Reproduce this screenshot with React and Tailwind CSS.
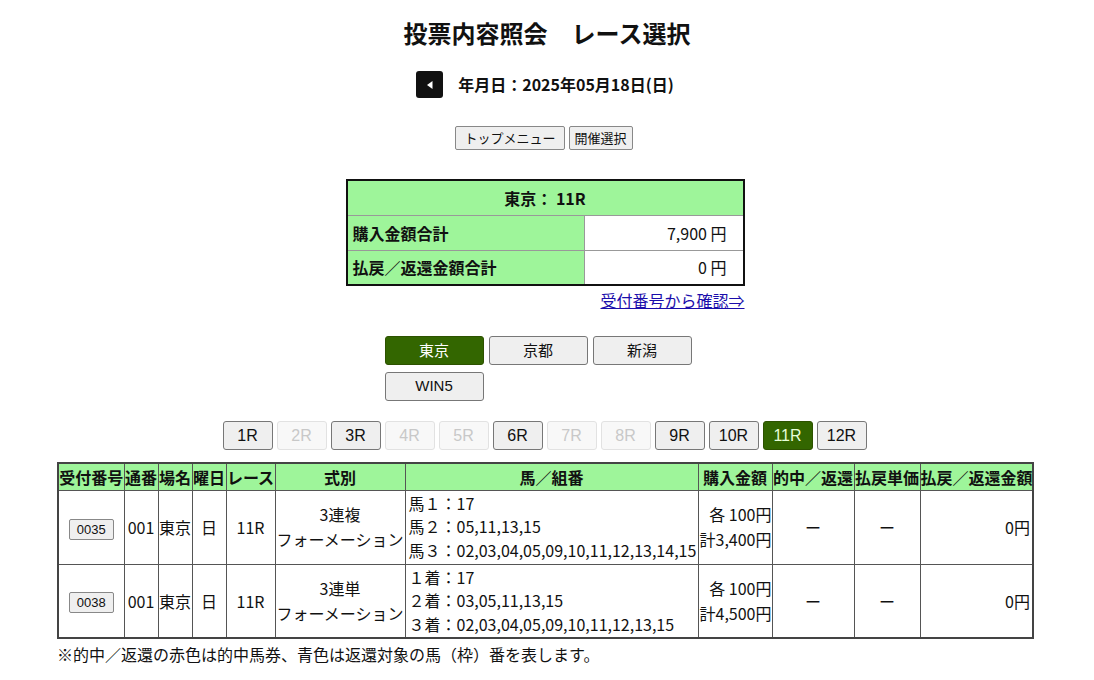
import React from "react";

const races = [
  { r: "1R", on: true },
  { r: "2R", on: false },
  { r: "3R", on: true },
  { r: "4R", on: false },
  { r: "5R", on: false },
  { r: "6R", on: true },
  { r: "7R", on: false },
  { r: "8R", on: false },
  { r: "9R", on: true },
  { r: "10R", on: true },
  { r: "11R", on: true, active: true },
  { r: "12R", on: true },
];

const bets = [
  {
    no: "0035",
    type: "3連複",
    lines: ["馬１：17", "馬２：05,11,13,15", "馬３：02,03,04,05,09,10,11,12,13,14,15"],
    total: "計3,400円",
  },
  {
    no: "0038",
    type: "3連単",
    lines: ["１着：17", "２着：03,05,11,13,15", "３着：02,03,04,05,09,10,11,12,13,15"],
    total: "計4,500円",
  },
];

const heads = [
  ["受付番号", "w-[66px]"],
  ["通番", "w-[34px]"],
  ["場名", "w-[34px]"],
  ["曜日", "w-[34px]"],
  ["レース", "w-[49px]"],
  ["式別", "w-[130px]"],
  ["馬／組番", "w-[293px]"],
  ["購入金額", "w-[74px]"],
  ["的中／返還", "w-[82px]"],
  ["払戻単価", "w-[66px]"],
  ["払戻／返還金額", "w-[113px]"],
];

const font = { fontFamily: '"Noto Sans CJK JP", "Noto Sans", sans-serif' };

export default function App() {
  return (
    <div className="w-[1094px] min-h-[680px] bg-white text-[#111]" style={font}>
      <h1 className="pt-[15px] text-center text-[24px] font-bold leading-[36px]">
        投票内容照会　レース選択
      </h1>

      <div className="mt-[20px] flex items-center justify-center gap-[15px] pr-[4px]">
        <button className="flex h-[27px] w-[27px] items-center justify-center rounded-[3px] bg-[#111]">
          <svg width="10" height="10" viewBox="0 0 10 10">
            <polygon points="7.5,1 7.5,9 2,5" fill="#fff" />
          </svg>
        </button>
        <span className="text-[16px] font-bold leading-[27px]">年月日：2025年05月18日(日)</span>
      </div>

      <div className="mt-[28px] flex justify-center gap-[4px] pr-[6px]">
        <button className="h-[24px] rounded-[2px] border border-[#888] bg-[#efefef] px-[8px] text-[13px] leading-[20px]">
          トップメニュー
        </button>
        <button className="h-[24px] rounded-[2px] border border-[#888] bg-[#efefef] px-[5px] text-[13px] leading-[20px]">
          開催選択
        </button>
      </div>

      <div className="mx-auto mt-[29px] w-[399px] -translate-x-[2px]">
        <table className="w-full border-collapse border-2 border-[#111] text-[16px]">
          <tbody>
            <tr className="h-[35px] bg-[#9ef59a]">
              <td colSpan={2} className="border border-[#999] text-center font-bold">
                東京： 11R
              </td>
            </tr>
            <tr className="h-[35px]">
              <td className="w-[238px] border border-[#999] bg-[#9ef59a] px-[5px] font-bold">購入金額合計</td>
              <td className="border border-[#999] pr-[16px] text-right">7,900 円</td>
            </tr>
            <tr className="h-[35px]">
              <td className="border border-[#999] bg-[#9ef59a] px-[5px] font-bold">払戻／返還金額合計</td>
              <td className="border border-[#999] pr-[16px] text-right">0 円</td>
            </tr>
          </tbody>
        </table>
        <div className="mt-[3px] text-right text-[16px] leading-[22px]">
          <a href="#" className="text-[#1a0dab] underline">受付番号から確認⇒</a>
        </div>
      </div>

      <div className="mx-auto mt-[25px] grid w-[307px] grid-cols-3 gap-x-[5px] gap-y-[7px] -translate-x-[9px]">
        <button className="h-[29px] rounded-[3px] border border-[#2d5200] bg-[#336600] text-[15px] text-white">東京</button>
        <button className="h-[29px] rounded-[3px] border border-[#777] bg-[#efefef] text-[15px]">京都</button>
        <button className="h-[29px] rounded-[3px] border border-[#777] bg-[#efefef] text-[15px]">新潟</button>
        <button className="h-[29px] rounded-[3px] border border-[#777] bg-[#efefef] text-[15px] font-['Liberation_Sans',sans-serif]">WIN5</button>
      </div>

      <div className="mt-[20px] flex justify-center gap-[4px] pr-[5px]">
        {races.map((x) => (
          <button
            key={x.r}
            className={
              x.active
                ? "h-[29px] w-[50px] rounded-[3px] border border-[#2d5200] bg-[#336600] text-[16px] text-[#e8ffd8] font-['Liberation_Sans',sans-serif]"
                : x.on
                ? "h-[29px] w-[50px] rounded-[3px] border border-[#777] bg-[#efefef] text-[16px] text-[#111] font-['Liberation_Sans',sans-serif]"
                : "h-[29px] w-[50px] rounded-[3px] border border-[#e2e2e2] bg-[#f8f8f8] text-[16px] text-[#c8c8c8] font-['Liberation_Sans',sans-serif]"
            }
          >
            {x.r}
          </button>
        ))}
      </div>

      <table className="ml-[57px] mt-[12px] w-[975px] table-fixed border-collapse border-2 border-[#444] text-[16px]">
        <thead>
          <tr className="h-[27px] bg-[#9ef59a]">
            {heads.map(([h, w]) => (
              <th key={h} className={`${w} whitespace-nowrap border border-[#555] p-0 text-center font-bold`}>
                {h}
              </th>
            ))}
          </tr>
        </thead>
        <tbody>
          {bets.map((b) => (
            <tr key={b.no} className="h-[74px]">
              <td className="border border-[#555] text-center">
                <span className="inline-block h-[21px] rounded-[2px] border border-[#888] bg-[#efefef] px-[7px] text-[13px] leading-[19px] font-['Liberation_Sans',sans-serif]">
                  {b.no}
                </span>
              </td>
              <td className="border border-[#555] text-center">001</td>
              <td className="border border-[#555] text-center">東京</td>
              <td className="border border-[#555] text-center">日</td>
              <td className="border border-[#555] text-center">11R</td>
              <td className="border border-[#555] text-center leading-[25px]">
                {b.type}
                <br />
                <span className="whitespace-nowrap">フォーメーション</span>
              </td>
              <td className="border border-[#555] px-[3px] leading-[23.5px]">
                {b.lines.map((l) => (
                  <div key={l} className="whitespace-nowrap">{l}</div>
                ))}
              </td>
              <td className="whitespace-nowrap border border-[#555] p-0 text-right leading-[25px]">
                各 100円
                <br />
                {b.total}
              </td>
              <td className="border border-[#555] text-center">ー</td>
              <td className="border border-[#555] text-center">ー</td>
              <td className="border border-[#555] pr-[2px] text-right">0円</td>
            </tr>
          ))}
        </tbody>
      </table>

      <p className="ml-[57px] mt-[3px] text-[16px] leading-[24px]">
        ※的中／返還の赤色は的中馬券、青色は返還対象の馬（枠）番を表します。
      </p>
    </div>
  );
}
